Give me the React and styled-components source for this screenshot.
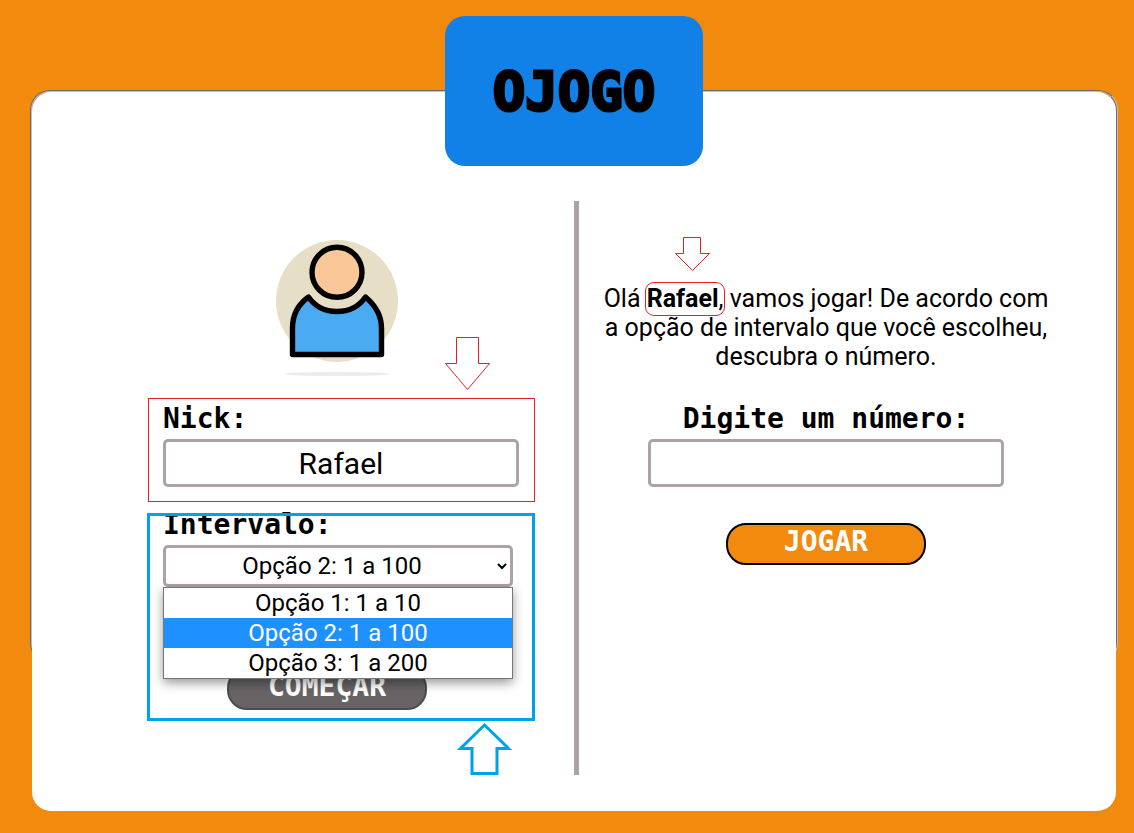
import React from "react";
import styled, { createGlobalStyle, css } from "styled-components";

const orange = "#f28a0e";
const blue = "#1180e7";
const taupe = "#aea3a4";
const markRed = "#ea1c24";
const markBlue = "#00a2e8";
const pixelFont = '"DejaVu Sans Mono", monospace';

const GlobalStyle = createGlobalStyle`
  *, *::before, *::after { box-sizing: border-box; }
  body {
    margin: 0;
    background: ${orange};
    color: #000;
    font-family: Roboto, sans-serif;
  }
`;

const Page = styled.div`
  padding: 16px 16px 22px 30px;
`;

const Banner = styled.header`
  position: relative;
  z-index: 1;
  display: flex;
  align-items: center;
  justify-content: center;
  width: 258px;
  height: 150px;
  margin: 0 auto -76px;
  padding-top: 2px;
  border-radius: 20px;
  background: ${blue};
`;

const Title = styled.h1`
  margin: 0;
  font-family: ${pixelFont};
  font-size: 54px;
  line-height: 60px;
  -webkit-text-stroke: 3px #000;
`;

const Frame = styled.main`
  position: relative;
  padding: 2px;

  &::before {
    content: "";
    position: absolute;
    inset: 0 0 150px;
    border: 2px groove #c0c0c0;
    border-radius: 20px;
  }
`;

const Panel = styled.div`
  position: relative;
  display: grid;
  grid-template-columns: 466fr 5px 494fr;
  padding: 109px 43px 36px 76px;
  border-radius: 19px;
  background: #fff;
`;

const Column = styled.section`
  display: flex;
  flex-direction: column;
  align-items: center;
  padding: ${(p) => (p.$low ? "83px 0 0" : "0 0 65px")};
`;

const Divider = styled.div`
  background: ${taupe};
`;

const Avatar = styled.svg`
  width: 208px;
  height: 197px;
  margin-bottom: 9px;
`;

const Group = styled.div`
  position: relative;
  display: flex;
  flex-direction: column;
  width: 356px;
  margin-bottom: ${(p) => p.$gap || 0}px;
`;

const Label = styled.label`
  margin-bottom: 8px;
  font: bold 28px/24px ${pixelFont};
  text-align: ${(p) => (p.$center ? "center" : "left")};
  white-space: nowrap;
`;

const control = css`
  border: 3px solid ${taupe};
  border-radius: 5px;
  background: #fff;
  color: #000;
  font-family: Roboto, sans-serif;
  text-align: center;
  outline: none;
`;

const TextInput = styled.input`
  ${control}
  width: 100%;
  height: 48px;
  padding: 0 8px;
  font-size: 30px;
`;

const SelectWrap = styled.div`
  position: relative;
  width: 350px;
  margin-bottom: 81px;
`;

const Select = styled.select`
  ${control}
  display: block;
  width: 100%;
  height: 42px;
  font-size: 24px;
  text-align-last: center;
`;

const Options = styled.ul`
  position: absolute;
  z-index: 1;
  top: 42px;
  left: 0;
  right: 0;
  margin: 0;
  padding: 0;
  border: 1px solid #767676;
  background: #fff;
  box-shadow: 0 4px 10px rgba(0, 0, 0, 0.4);
  list-style: none;
`;

const Option = styled.li`
  font-size: 24px;
  line-height: 30px;
  text-align: center;
  background: ${(p) => (p.$active ? "#1e90ff" : "#fff")};
  color: ${(p) => (p.$active ? "#fff" : "#000")};
`;

const Button = styled.button`
  width: 200px;
  height: 42px;
  padding: 0 0 4px;
  border: 2px solid ${(p) => (p.$muted ? "#4e4b4c" : "#000")};
  border-radius: 20px;
  background: ${(p) => (p.$muted ? "#686465" : orange)};
  color: #fff;
  font: bold 28px/24px ${pixelFont};
  ${(p) => p.$muted && "margin-left: 64px;"}
`;

const Message = styled.p`
  width: 456px;
  margin: 0 0 36px;
  font-size: 25px;
  line-height: 29px;
  text-align: center;
`;

const Name = styled.span`
  position: relative;
`;

const Mark = styled.span`
  position: absolute;
  z-index: 2;
  pointer-events: none;
`;

const NickMark = styled(Mark)`
  inset: -9px -16px -15px -15px;
  border: 1px solid ${markRed};
`;

const RangeMark = styled(Mark)`
  inset: 0 -16px -11px;
  border: 3px solid ${markBlue};
`;

const NameMark = styled(Mark)`
  inset: -2px -6px -3px -2px;
  border: 1px solid ${markRed};
  border-radius: 9px;
`;

const Arrow = styled.svg`
  position: absolute;
  fill: none;
  stroke: ${(p) => p.$color};
  overflow: visible;
`;

const NickArrow = styled(Arrow)`
  right: 29px;
  bottom: 97px;
`;

const RangeArrow = styled(Arrow)`
  right: 6px;
  top: 207px;
`;

const NameArrow = styled(Arrow)`
  left: 28px;
  bottom: 42px;
`;

const ranges = ["Opção 1: 1 a 10", "Opção 2: 1 a 100", "Opção 3: 1 a 200"];

export default function App() {
  return (
    <>
      <GlobalStyle />
      <Page>
        <Banner>
          <Title>OJOGO</Title>
        </Banner>
        <Frame>
          <Panel>
            <Column>
              <Avatar viewBox="237 201 208 197" aria-hidden="true">
                <circle cx="337" cy="301" r="61" fill="#e6dec6" />
                <ellipse cx="337" cy="374" rx="53" ry="2" fill="#ebebeb" />
                <g stroke="#000" strokeWidth="5.4" strokeLinejoin="round">
                  <path
                    d="M292.5 354.5V328C292.5 315 298 304.5 308.5 297C315 306.5 325 311.5 337 311.5S359 306.5 365.5 297C376 306 381.5 316 381.5 328V354.5Z"
                    fill="#4aabf3"
                  />
                  <circle cx="337" cy="272.3" r="25" fill="#fac898" />
                </g>
              </Avatar>
              <Group $gap={26}>
                <Label htmlFor="nick">Nick:</Label>
                <TextInput id="nick" defaultValue="Rafael" />
                <NickMark />
                <NickArrow $color={markRed} width="45" height="53" viewBox="0 0 45 53">
                  <path d="M11.5.5H33.5V26.5H44.5L22.5 52.5L.5 26.5H11.5Z" />
                </NickArrow>
              </Group>
              <Group>
                <Label htmlFor="range">Intervalo:</Label>
                <SelectWrap>
                  <Select id="range" defaultValue={ranges[1]}>
                    {ranges.map((r) => (
                      <option key={r}>{r}</option>
                    ))}
                  </Select>
                  <Options role="listbox" aria-label="Intervalo">
                    {ranges.map((r, i) => (
                      <Option key={r} role="option" aria-selected={i === 1} $active={i === 1}>
                        {r}
                      </Option>
                    ))}
                  </Options>
                </SelectWrap>
                <Button type="button" $muted>
                  COMEÇAR
                </Button>
                <RangeMark />
                <RangeArrow $color={markBlue} width="58" height="56" viewBox="0 0 58 56">
                  <path d="M29.5 5L53.5 28.5H42V53.5H17V28.5H5.5Z" strokeWidth="3" />
                </RangeArrow>
              </Group>
            </Column>
            <Divider />
            <Column $low>
              <Message>
                Olá{" "}
                <Name>
                  <b>Rafael</b>
                  <NameMark />
                  <NameArrow $color={markRed} width="35" height="34" viewBox="0 0 35 34">
                    <path d="M8.5.5H25.5V16.5H34.5L17.5 33.5L.5 16.5H8.5Z" />
                  </NameArrow>
                </Name>
                , vamos jogar! De acordo com a opção de intervalo que você escolheu,
                descubra o número.
              </Message>
              <Group $gap={36}>
                <Label htmlFor="guess" $center>
                  Digite um número:
                </Label>
                <TextInput id="guess" />
              </Group>
              <Button type="button">JOGAR</Button>
            </Column>
          </Panel>
        </Frame>
      </Page>
    </>
  );
}
